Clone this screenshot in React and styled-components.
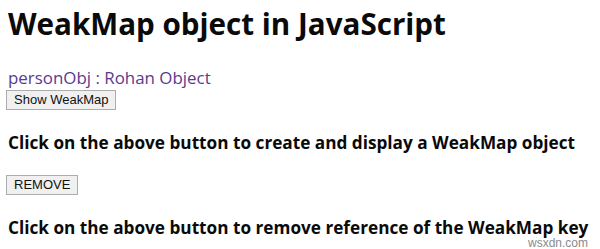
import React from 'react';
import styled, { createGlobalStyle } from 'styled-components';

const GlobalStyle = createGlobalStyle`
  html, body {
    margin: 0;
    padding: 0;
    background: #ffffff;
  }
  body {
    font-family: "Open Sans", "Noto Sans", sans-serif;
    color: #000000;
  }
`;

const Page = styled.div`
  position: relative;
  width: 600px;
  height: 249px;
  padding: 0 8px;
  box-sizing: border-box;
  overflow: hidden;
  display: flex;
  flex-direction: column;
  align-items: flex-start;
`;

const Heading = styled.h1`
  margin: 6px 0 0 0;
  font-size: 29.6px;
  line-height: 36px;
  font-weight: 700;
  color: #0a0a0a;
`;

const Result = styled.div`
  margin-top: 26px;
  font-size: 16.9px;
  line-height: 20px;
  color: #5a3a8f;
`;

const Button = styled.button`
  margin-top: ${props => props.$top || 0}px;
  margin-left: -2px;
  height: 20px;
  padding: 0 7px;
  font-family: "Liberation Sans", Arial, sans-serif;
  font-size: 13px;
  color: #111111;
  background: #f0f0f0;
  border: 1px solid #adadad;
  border-radius: 0;
  line-height: 18px;
`;

const Note = styled.p`
  margin: ${props => props.$top}px 0 0 0;
  font-size: 17.2px;
  line-height: 22px;
  font-weight: 700;
  color: #0a0a0a;
`;

const Watermark = styled.span`
  position: absolute;
  right: 12px;
  bottom: -1px;
  font-family: "Liberation Sans", Arial, sans-serif;
  font-size: 12px;
  line-height: 14px;
  color: #8a8a8a;
  text-shadow: 0 0 2px #ffffff;
`;

export default function App() {
  return (
    <>
      <GlobalStyle />
      <Page>
        <Heading>WeakMap object in JavaScript</Heading>
        <Result>personObj : Rohan Object</Result>
        <Button $top={2}>Show WeakMap</Button>
        <Note $top={22}>Click on the above button to create and display a WeakMap object</Note>
        <Button $top={21}>REMOVE</Button>
        <Note $top={22}>Click on the above button to remove reference of the WeakMap key</Note>
        <Watermark>wsxdn.com</Watermark>
      </Page>
    </>
  );
}
